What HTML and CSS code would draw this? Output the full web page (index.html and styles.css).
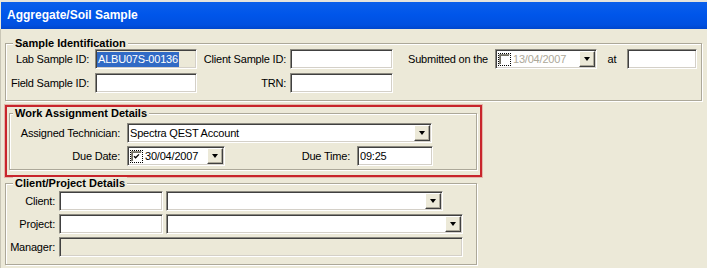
FILE: index.html
```html
<!DOCTYPE html>
<html lang="en">
<head>
    <meta charset="UTF-8">
    <title>Aggregate/Soil Sample</title>
    <link rel="stylesheet" href="styles.css">
</head>
<body>
    <!-- Title bar -->
    <div class="titlebar">Aggregate/Soil Sample</div>

    <div class="form">
        <!-- Sample Identification -->
        <fieldset class="group group-sample">
            <legend>Sample Identification</legend>
            <div class="sample-grid">
                <span class="label">Lab Sample ID:</span>
                <div class="field locked"><span class="selected">ALBU07S-00136</span></div>
                <span class="label">Client Sample ID:</span>
                <div class="field"></div>
                <span class="label label-submitted">Submitted on the</span>
                <div class="field datepicker">
                    <span class="check"></span>
                    <span class="date muted">13/04/2007</span>
                    <span class="drop"></span>
                </div>
                <span class="label label-at">at</span>
                <div class="field"></div>

                <span class="label">Field Sample ID:</span>
                <div class="field"></div>
                <span class="label">TRN:</span>
                <div class="field"></div>
            </div>
        </fieldset>

        <!-- Work Assignment Details (highlighted) -->
        <div class="highlight">
            <fieldset class="group group-work">
                <legend>Work Assignment Details</legend>
                <div class="work-grid">
                    <span class="label">Assigned Technician:</span>
                    <div class="field combo combo-tech">
                        <span class="value">Spectra QEST Account</span>
                        <span class="drop"></span>
                    </div>

                    <span class="label">Due Date:</span>
                    <div class="field datepicker">
                        <span class="check checked">
                            <svg width="9" height="9" viewBox="0 0 9 9"><path d="M2 4.2 L3.6 5.8 L7 2.4" fill="none" stroke="#000" stroke-width="1.3"/></svg>
                        </span>
                        <span class="date">30/04/2007</span>
                        <span class="drop"></span>
                    </div>
                    <span class="label">Due Time:</span>
                    <div class="field"><span class="value">09:25</span></div>
                </div>
            </fieldset>
        </div>

        <!-- Client/Project Details -->
        <fieldset class="group group-client">
            <legend>Client/Project Details</legend>
            <div class="row">
                <span class="label label-client">Client:</span>
                <div class="field code"></div>
                <div class="field combo combo-client"><span class="drop"></span></div>
            </div>
            <div class="row">
                <span class="label label-client">Project:</span>
                <div class="field code"></div>
                <div class="field combo combo-project"><span class="drop"></span></div>
            </div>
            <div class="row">
                <span class="label label-client">Manager:</span>
                <div class="field locked manager"></div>
            </div>
        </fieldset>
    </div>
</body>
</html>
```

FILE: styles.css
```css
/* Window */
* {
    box-sizing: border-box;
}
body {
    margin: 0;
    width: 707px;
    height: 268px;
    overflow: hidden;
    background-color: #ece9d8;
    font-family: "Liberation Sans", Arial, sans-serif;
    font-size: 11px;
    letter-spacing: -0.2px;
    color: #000000;
}
.titlebar {
    height: 29px;
    margin-left: 1px;
    padding-left: 6px;
    border-top: 2px solid #e6e4dc;
    line-height: 27px;
    font-size: 12px;
    font-weight: bold;
    letter-spacing: 0;
    color: #ffffff;
    background: linear-gradient(to bottom, #0b5fea 0%, #0056ea 45%, #0050e0 85%, #0046cc 100%);
}
.form {
    padding: 8px 0 0 4px;
    border-left: 1px solid #c9c6b6;
    height: 239px;
}

/* Group boxes */
.group {
    margin: 0;
    padding: 0;
    min-width: 0;
    border: 1px solid #aca899;
    box-shadow: inset 1px 1px #ffffff, 1px 1px #ffffff;
}
.group legend {
    margin-left: 7px;
    padding: 0 2px;
    line-height: 12px;
    font-weight: bold;
    letter-spacing: 0;
    background-color: #ece9d8;
}
.group-sample {
    width: 697px;
    padding-bottom: 7px;
}
.highlight {
    width: 477px;
    margin-top: 4px;
    padding: 0 3px 5px 2px;
    border: 2px solid #c8252c;
    box-shadow: 0 0 0 1px rgba(214, 90, 90, 0.35);
}
.group-work {
    width: 468px;
    padding: 4px 0 3px 0;
}
.group-work legend {
    margin-left: 3px;
}
.group-client {
    width: 472px;
    padding: 2px 0 7px 0;
}

/* Labels */
.label {
    line-height: 20px;
    white-space: nowrap;
    text-align: right;
    padding-right: 6px;
}
.label-submitted {
    padding-right: 7px;
}
.label-at {
    text-align: center;
    padding-right: 0;
}

/* Layout grids */
.sample-grid {
    display: grid;
    grid-template-columns: 89px 102px 93px 103px 102px 102px 30px 70px;
    grid-auto-rows: 20px;
    row-gap: 4px;
}
.sample-grid .label:nth-child(3),
.sample-grid .label:nth-child(11) {
    padding-right: 4px;
}
.work-grid {
    display: grid;
    grid-template-columns: 117px 98px 132px 76px;
    grid-auto-rows: 20px;
    row-gap: 3px;
}
.work-grid .label {
    padding-right: 7px;
}
.combo-tech {
    grid-column: 2 / 5;
    width: 305px;
}
.row {
    display: flex;
    height: 20px;
    margin-bottom: 3px;
}
.row:last-child {
    margin-bottom: 0;
}
.label-client {
    width: 53px;
    padding-right: 4px;
}

/* Sunken edit fields */
.field {
    display: flex;
    align-items: center;
    height: 20px;
    padding: 0 1px 0 2px;
    background-color: #ffffff;
    border: 1px solid;
    border-color: #8c8a80 #ffffff #ffffff #8c8a80;
    box-shadow: inset 1px 1px #404040, inset -1px -1px #d4d0c8;
    white-space: nowrap;
    overflow: hidden;
}
.field.locked {
    background-color: #ece9d8;
    padding-left: 1px;
}
.selected {
    line-height: 15px;
    padding: 0 1px;
    color: #ffffff;
    background-color: #316ac5;
}
.code {
    width: 104px;
}
.combo-client {
    width: 277px;
    margin-left: 3px;
}
.combo-project {
    width: 297px;
    margin-left: 3px;
}
.manager {
    width: 404px;
}

/* Drop-down buttons */
.drop {
    display: flex;
    align-items: center;
    justify-content: center;
    width: 16px;
    height: 16px;
    margin-left: auto;
    background-color: #ece9d8;
    border: 1px solid;
    border-color: #ffffff #404040 #404040 #ffffff;
    box-shadow: inset -1px -1px #aca899;
}
.drop::after {
    content: "";
    border-top: 4px solid #000000;
    border-left: 3.5px solid transparent;
    border-right: 3.5px solid transparent;
}

/* Date pickers */
.datepicker {
    padding-left: 3px;
}
.check {
    display: flex;
    align-items: center;
    justify-content: center;
    width: 11px;
    height: 11px;
    background-color: #ffffff;
    border: 1px solid;
    border-color: #8c8a80 #ffffff #ffffff #8c8a80;
    box-shadow: inset 1px 1px #716f64;
    outline: 1px dotted #000000;
}
.date {
    margin-left: 3px;
}
.muted {
    color: #aca899;
}
```
